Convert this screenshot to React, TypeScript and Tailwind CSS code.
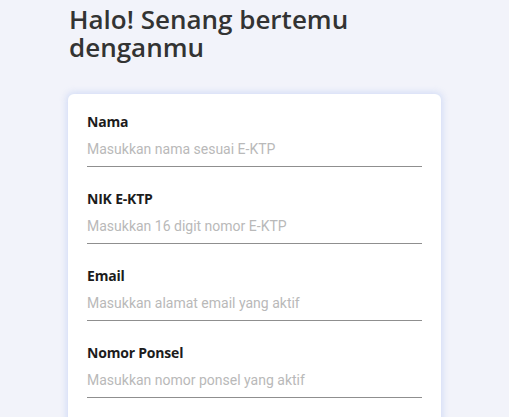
const fields = [
  { label: "Nama", placeholder: "Masukkan nama sesuai E-KTP", type: "text" },
  { label: "NIK E-KTP", placeholder: "Masukkan 16 digit nomor E-KTP", type: "text" },
  { label: "Email", placeholder: "Masukkan alamat email yang aktif", type: "email" },
  { label: "Nomor Ponsel", placeholder: "Masukkan nomor ponsel yang aktif", type: "tel" },
  { label: "Kata Sandi", placeholder: "Masukkan kata sandi", type: "password" },
];

const App = () => {
  return (
    <div className="min-h-screen bg-[#f2f3fa] font-['Open_Sans',sans-serif]">
      <div className="mx-auto w-[373px] pt-[5px]">
        <h1 className="text-[26px] leading-[28px] font-semibold text-[#333333] pl-px">
          Halo! Senang bertemu denganmu
        </h1>

        <form className="mt-[33px] rounded-md bg-white px-[19px] pt-[18px] pb-6 shadow-[0_0_6px_2px_rgba(205,216,245,0.8)]">
          {fields.map((f) => (
            <div key={f.label} className="mb-[22px]">
              <label className="block text-sm leading-5 font-bold tracking-[-0.2px] text-[#1c1c1c]">{f.label}</label>
              <input
                type={f.type}
                placeholder={f.placeholder}
                className="block h-[35px] w-full border-b border-[#8f8f8f] bg-transparent font-['Roboto',sans-serif] text-sm text-[#333] outline-none placeholder:text-[#b9b9b9]"
              />
            </div>
          ))}
        </form>
      </div>
    </div>
  );
};

export default App;
